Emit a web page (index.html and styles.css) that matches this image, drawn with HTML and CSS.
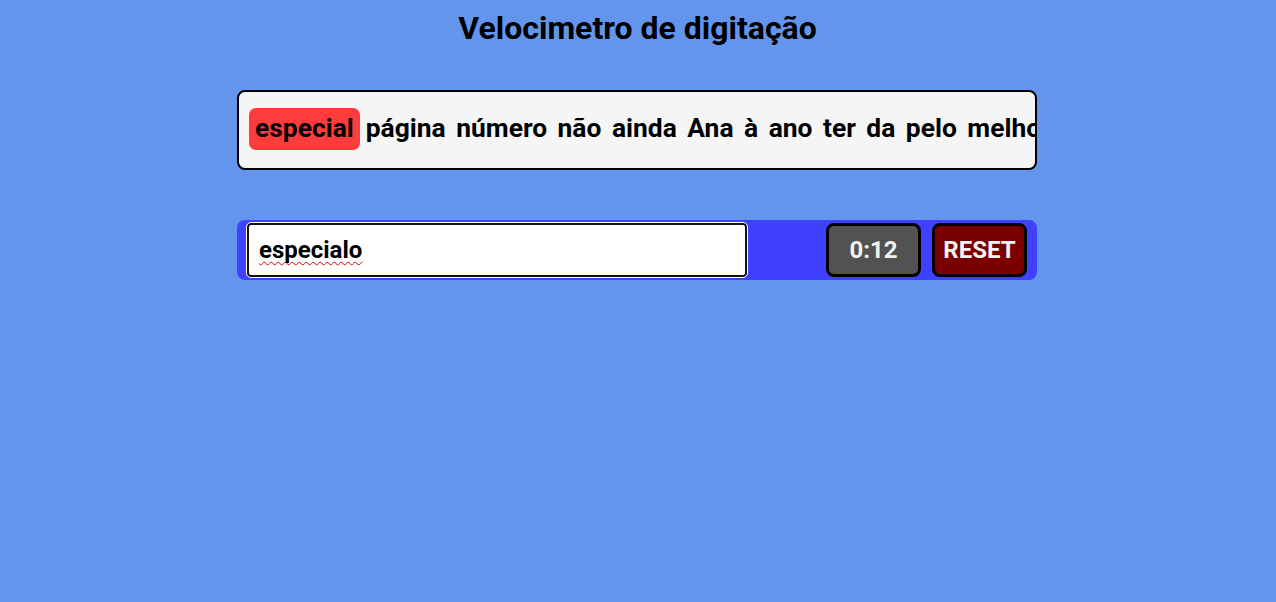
FILE: index.html
```html
<!DOCTYPE html>
<html lang="pt">
<head>
<meta charset="utf-8">
<title>Velocimetro de digitação</title>
<link rel="stylesheet" href="styles.css">
</head>
<body>
<main class="app">
  <h1 class="title">Velocimetro de digitação</h1>
  <div class="words">
    <span class="word current">especial</span>
    <span class="word">página</span>
    <span class="word">número</span>
    <span class="word">não</span>
    <span class="word">ainda</span>
    <span class="word">Ana</span>
    <span class="word">à</span>
    <span class="word">ano</span>
    <span class="word">ter</span>
    <span class="word">da</span>
    <span class="word">pelo</span>
    <span class="word">melhor</span>
  </div>
  <div class="bar">
    <div class="typing" contenteditable="true" role="textbox"><span class="misspelled">especialo</span></div>
    <div class="timer">0:12</div>
    <button class="reset" type="button">RESET</button>
  </div>
</main>
</body>
</html>
```

FILE: styles.css
```css
html, body {
  margin: 0;
  padding: 0;
}

body {
  background: #6495ed;
  font-family: Roboto, "Liberation Sans", sans-serif;
  color: #000;
}

.app {
  display: flex;
  flex-direction: column;
  align-items: center;
  padding-top: 10px;
  padding-right: 2px;
}

.title {
  margin: 0 0 0 1px;
  font-size: 32px;
  font-weight: 700;
  line-height: 37px;
}

.words {
  box-sizing: border-box;
  width: 800px;
  height: 80px;
  margin-top: 43px;
  padding: 0 10px 3px;
  display: flex;
  align-items: center;
  background: #f5f5f5;
  border: 2px solid #000;
  border-radius: 8px;
  overflow: hidden;
  white-space: nowrap;
}

.word {
  flex: none;
  font-size: 26.4px;
  font-weight: 700;
  line-height: 31px;
  margin-right: 10.5px;
}

.word.current {
  background: #ff3c3c;
  border-radius: 7px;
  padding: 5px 6px 6px;
  margin-right: 6px;
}

.bar {
  box-sizing: border-box;
  width: 800px;
  height: 60px;
  margin-top: 50px;
  padding: 0 10px;
  display: flex;
  align-items: center;
  gap: 11px;
  background: #4040ff;
  border-radius: 8px;
}

.typing {
  box-sizing: border-box;
  width: 500px;
  height: 54px;
  padding: 0 10px;
  display: flex;
  align-items: center;
  border: 2px solid #111;
  border-radius: 4px;
  outline: 1px solid #fff;
  background: #fff;
  font-size: 24px;
  font-weight: 700;
  white-space: nowrap;
  overflow: hidden;
}

.misspelled {
  text-decoration: underline wavy #e00000;
  text-decoration-thickness: 1px;
  text-underline-offset: 3px;
  text-decoration-skip-ink: none;
}

.timer,
.reset {
  box-sizing: border-box;
  width: 95px;
  height: 54px;
  display: flex;
  align-items: center;
  justify-content: center;
  border: 3px solid #000;
  border-radius: 8px;
  color: #f2f2f2;
  font-family: Roboto, "Liberation Sans", sans-serif;
  font-size: 24px;
  font-weight: 700;
  padding: 0;
}

.timer {
  margin-left: auto;
  background: #525252;
}

.reset {
  background: #7a0000;
}
```
